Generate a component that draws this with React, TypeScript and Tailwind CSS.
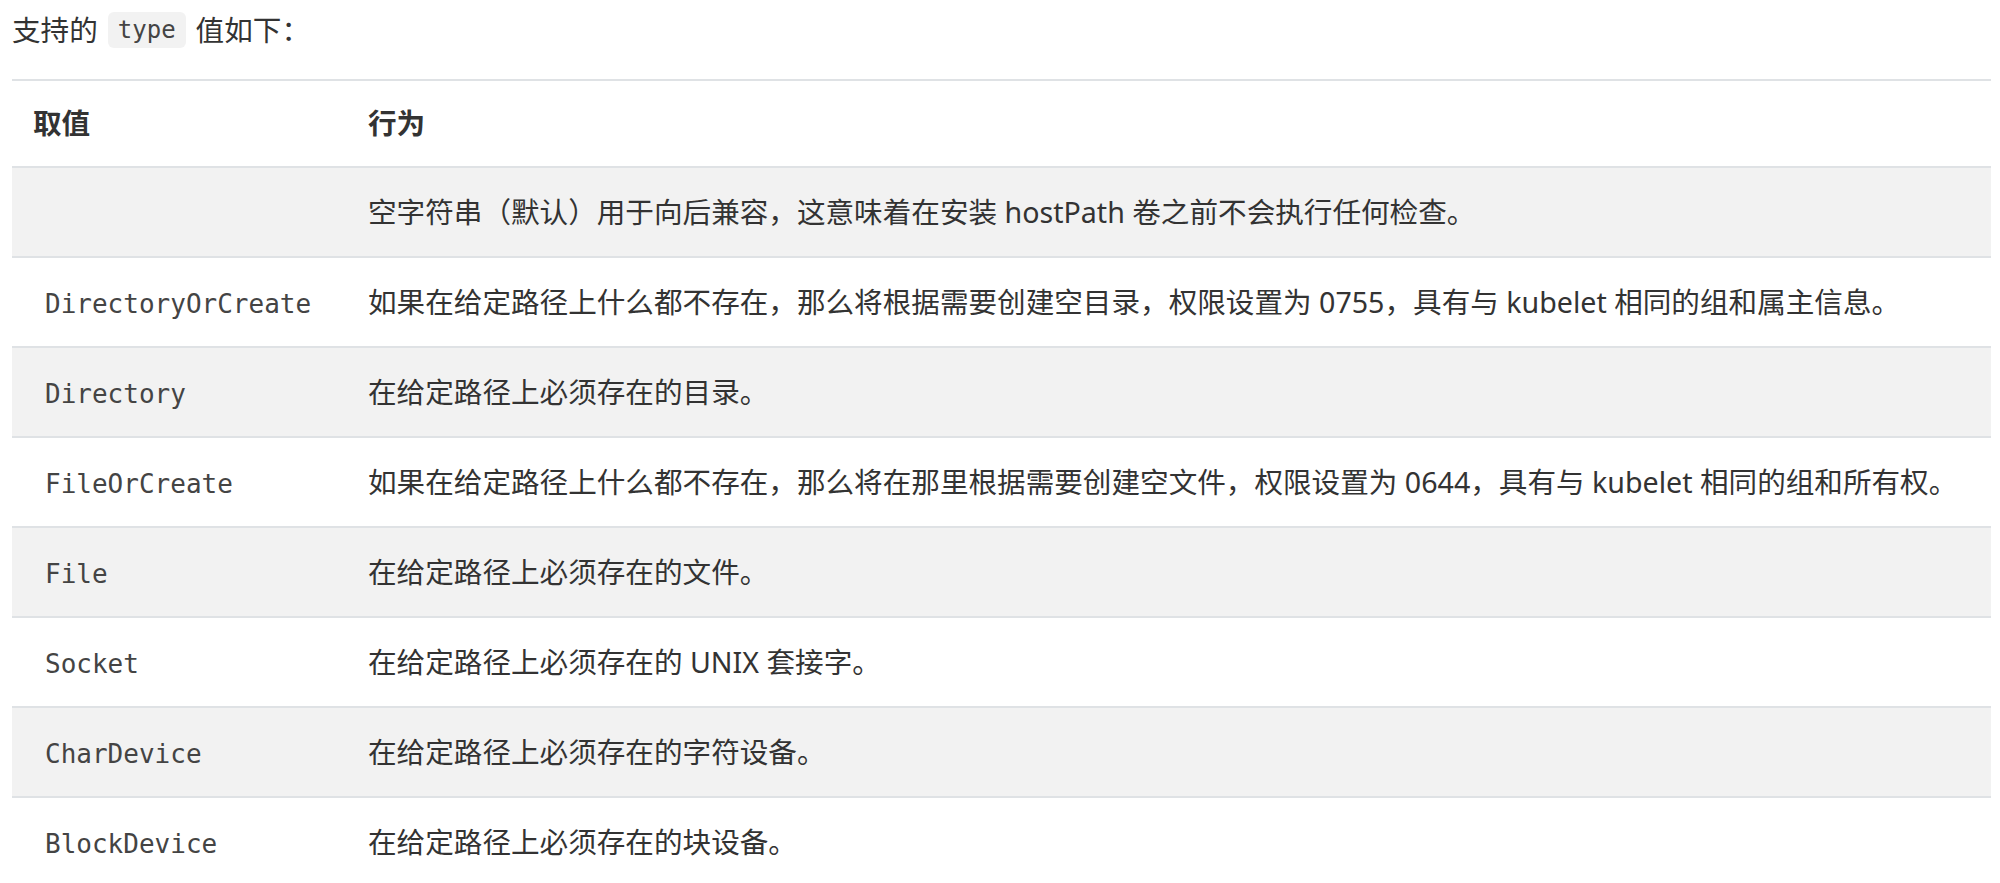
const rows: { value: string; desc: string }[] = [
    { value: '', desc: '空字符串（默认）用于向后兼容，这意味着在安装 hostPath 卷之前不会执行任何检查。' },
    { value: 'DirectoryOrCreate', desc: '如果在给定路径上什么都不存在，那么将根据需要创建空目录，权限设置为 0755，具有与 kubelet 相同的组和属主信息。' },
    { value: 'Directory', desc: '在给定路径上必须存在的目录。' },
    { value: 'FileOrCreate', desc: '如果在给定路径上什么都不存在，那么将在那里根据需要创建空文件，权限设置为 0644，具有与 kubelet 相同的组和所有权。' },
    { value: 'File', desc: '在给定路径上必须存在的文件。' },
    { value: 'Socket', desc: '在给定路径上必须存在的 UNIX 套接字。' },
    { value: 'CharDevice', desc: '在给定路径上必须存在的字符设备。' },
    { value: 'BlockDevice', desc: '在给定路径上必须存在的块设备。' },
];

const App = () => {
    return (
        <div className="min-h-screen bg-white px-[12px] text-[#333] font-['Noto_Sans','Noto_Sans_CJK_SC',sans-serif] text-[28.6px]">
            {/* intro line */}
            <p className="flex h-[60px] items-center leading-none">
                支持的
                <code className="mx-[10px] rounded-md bg-[#f2f2f2] px-[10px] py-[6px] font-['DejaVu_Sans_Mono',monospace] text-[24px] text-[#444]">type</code>
                值如下：
            </p>

            <table className="mt-[19px] w-[1979px] border-collapse">
                <thead>
                    <tr className="h-[87px] border-t-2 border-[#dfe2e5]">
                        <th className="w-[336px] pl-[21px] text-left font-bold">取值</th>
                        <th className="pl-[20px] text-left font-bold">行为</th>
                    </tr>
                </thead>
                <tbody>
                    {rows.map((row, index) => (
                        <tr
                            key={index}
                            className={`h-[90px] border-t-2 border-[#dfe2e5] ${index % 2 === 0 ? 'bg-[#f2f2f2]' : 'bg-white'}`}
                        >
                            <td className="pl-[21px]">
                                {row.value && (
                                    <code className="px-[12px] font-['DejaVu_Sans_Mono',monospace] text-[26px] text-[#444]">{row.value}</code>
                                )}
                            </td>
                            <td className="pl-[20px] whitespace-nowrap">{row.desc}</td>
                        </tr>
                    ))}
                </tbody>
            </table>
        </div>
    );
};

export default App;
